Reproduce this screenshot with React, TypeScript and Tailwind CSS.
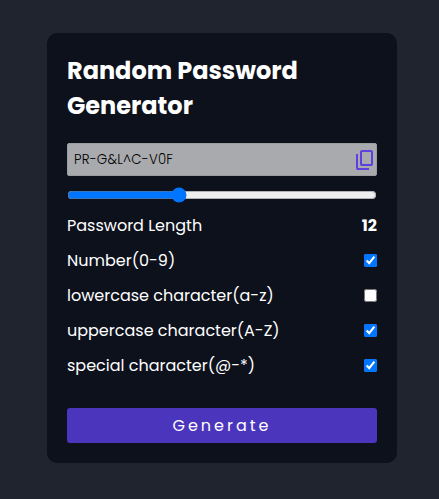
import { useState } from "react";

const options = [
  { label: "Number(0-9)", checked: true },
  { label: "lowercase character(a-z)", checked: false },
  { label: "uppercase character(A-Z)", checked: true },
  { label: "special character(@-*)", checked: true },
];

function CopyIcon() {
  return (
    <svg viewBox="0 0 24 24" className="-mr-px size-6 shrink-0 fill-[#5f3fe0]" aria-hidden="true">
      <path d="M9 18q-.825 0-1.412-.587T7 16V4q0-.825.588-1.412T9 2h9q.825 0 1.413.588T20 4v12q0 .825-.587 1.413T18 18zm0-2h9V4H9zm-4 6q-.825 0-1.412-.587T3 20V6h2v14h11v2z" />
    </svg>
  );
}

export default function App() {
  const [length, setLength] = useState(12);
  return (
    <main className="flex h-[499px] bg-[#20242f] pt-[33px] pl-[47px] font-['Poppins','Inter',sans-serif] text-white">
      <section className="h-[430px] w-[350px] rounded-[10px] bg-[#0d111c] p-5">
        <h1 className="text-[24px] leading-[35px] font-bold">
          Random Password
          <br />
          Generator
        </h1>
        <div className="mt-5 mb-px flex h-[33px] items-center rounded-[2px] border border-[#9c9da0] bg-[#a9aaad] pl-1.5">
          <input
            readOnly
            value="PR-G&L^C-V0F"
            className="min-w-0 flex-1 bg-transparent text-[13.333px] font-light tracking-[0.2px] text-black outline-none"
          />
          <CopyIcon />
        </div>
        <div className="flex h-[31px] items-center pt-1">
          <input
            type="range"
            min={1}
            max={32}
            value={length}
            onChange={(e) => setLength(Number(e.target.value))}
            className="h-4 w-full"
          />
        </div>
        <div className="flex h-[35px] items-center justify-between">
          <span className="text-base">Password Length</span>
          <b className="text-base">{length}</b>
        </div>
        {options.map((o) => (
          <label key={o.label} className="flex h-[35px] items-center justify-between">
            <span className="text-base whitespace-nowrap">{o.label}</span>
            <input type="checkbox" defaultChecked={o.checked} className="size-[13px]" />
          </label>
        ))}
        <button className="mt-[25px] h-[35px] w-full rounded-[3px] bg-[#4b35bd] text-base tracking-[3px]">
          Generate
        </button>
      </section>
    </main>
  );
}
